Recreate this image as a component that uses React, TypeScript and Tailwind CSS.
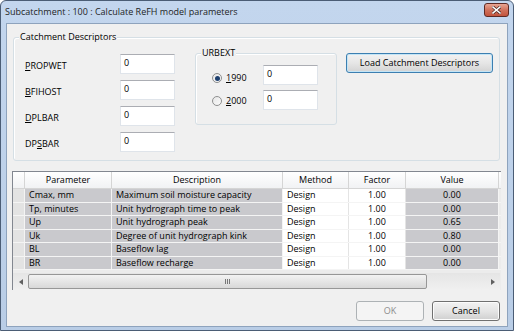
import React from "react";

const font = { fontFamily: "'Open Sans', 'Noto Sans', sans-serif" };

const rows = [
  { p: "Cmax, mm", d: "Maximum soil moisture capacity", v: "0.00" },
  { p: "Tp, minutes", d: "Unit hydrograph time to peak", v: "0.00" },
  { p: "Up", d: "Unit hydrograph peak", v: "0.65" },
  { p: "Uk", d: "Degree of unit hydrograph kink", v: "0.80" },
  { p: "BL", d: "Baseflow lag", v: "0.00" },
  { p: "BR", d: "Baseflow recharge", v: "0.00" },
];

function TextBox({ value }: { value: string }) {
  return (
    <div className="h-[20px] w-[55px] border border-[#dfe4ea] border-t-[#abadb3] bg-white pl-[3px] pt-[2px] text-[9px] leading-[12px]">
      {value}
    </div>
  );
}

function Label({ pre, u, post }: { pre?: string; u: string; post?: string }) {
  return (
    <span>
      {pre}
      <span className="underline underline-offset-1">{u}</span>
      {post}
    </span>
  );
}

function Radio({ checked }: { checked?: boolean }) {
  return (
    <div className="grid size-[10px] place-items-center rounded-full border border-[#8e8f8f] bg-gradient-to-br from-[#e6e6e6] to-[#fbfbfb]">
      {checked && <div className="size-[5px] rounded-full bg-[#1d3f6e]" />}
    </div>
  );
}

function Button({
  children,
  width,
  variant = "normal",
}: {
  children: React.ReactNode;
  width: string;
  variant?: "normal" | "default" | "disabled";
}) {
  return (
    <div
      className={
        "flex h-[20px] items-center justify-center rounded-[3px] border text-[9px] " +
        width +
        (variant === "disabled"
          ? " border-[#adb2b5] bg-[#f4f4f4] text-[#8d8d8d]"
          : variant === "default"
            ? " border-[#3c7fb1] bg-gradient-to-b from-[#f2f2f2] via-[#e6e6e6] to-[#d3d3d3] shadow-[inset_0_0_0_1px_#c4e5f6]"
            : " border-[#707070] bg-gradient-to-b from-[#f2f2f2] via-[#e5e5e5] to-[#cfcfcf] shadow-[inset_0_0_0_1px_#fcfcfc]")
      }
    >
      {children}
    </div>
  );
}

export default function App() {
  return (
    <div className="h-[331px] w-[514px] overflow-hidden text-black" style={font}>
      <div className="flex h-full w-full flex-col rounded-t-[6px] border border-[#4b5d75] bg-gradient-to-b from-[#c3d6ee] to-[#b9cde6]">
        {/* title bar */}
        <div className="flex h-[22px] items-center justify-between pl-[4px] pr-[4px]">
          <span className="text-[9px] text-[#1e1e1e]">Subcatchment : 100 : Calculate ReFH model parameters</span>
          <div className="mt-[-4px] flex h-[14px] w-[25px] items-center justify-center rounded-[3px] border border-[#5e2a25] bg-gradient-to-b from-[#e8a593] via-[#d0715c] to-[#c2533c]">
            <svg width="9" height="8" viewBox="0 0 9 8">
              <path d="M1 1 L8 7 M8 1 L1 7" stroke="#4a2520" strokeWidth="3" strokeLinecap="square" />
              <path d="M1 1 L8 7 M8 1 L1 7" stroke="#ffffff" strokeWidth="1.6" strokeLinecap="square" />
            </svg>
          </div>
        </div>

        {/* client area */}
        <div className="mx-[5px] h-[304px] border border-[#8ea3bd] bg-[#f0f0f0]">
          {/* Catchment Descriptors group */}
          <div className="relative ml-[6px] mt-[13px] h-[124px] w-[487px] rounded-[3px] border border-[#d5dfe5] shadow-[inset_1px_1px_0_#ffffff]">
            <span className="absolute left-[5px] top-[-7px] bg-[#f0f0f0] px-[1px] text-[9px] leading-[12px]">
              Catchment Descriptors
            </span>
            <div className="flex pl-[11px] pt-[15px] text-[9px]">
              <div className="mt-[1px] flex flex-col gap-[6px]">
                {[
                  <Label u="P" post="ROPWET" />,
                  <Label u="B" post="FIHOST" />,
                  <Label u="D" post="PLBAR" />,
                  <Label pre="DP" u="S" post="BAR" />,
                ].map((l, i) => (
                  <div key={i} className="flex items-center">
                    <div className="w-[95px] pt-[3px]">{l}</div>
                    <TextBox value="0" />
                  </div>
                ))}
              </div>

              <div className="relative ml-[20px] h-[72px] w-[142px] rounded-[3px] border border-[#d5dfe5] shadow-[inset_1px_1px_0_#ffffff]">
                <span className="absolute left-[5px] top-[-7px] bg-[#f0f0f0] px-[1px] leading-[12px]">URBEXT</span>
                <div className="flex flex-col gap-[5px] pl-[16px] pt-[11px]">
                  {["1990", "2000"].map((y, i) => (
                    <div key={y} className="flex items-center">
                      <div className={"flex w-[51px] items-center gap-[4px] " + (i === 0 ? "pt-[6px]" : "pt-[2px]")}>
                        <Radio checked={i === 0} />
                        <Label u={y[0]} post={y.slice(1)} />
                      </div>
                      <TextBox value="0" />
                    </div>
                  ))}
                </div>
              </div>

              <div className="ml-[9px]">
                <Button width="w-[147px]" variant="default">
                  Load Catchment Descriptors
                </Button>
              </div>
            </div>
          </div>

          {/* parameter grid */}
          <div className="ml-[5px] mt-[10px] h-[119px] w-[489px] border-l border-t border-l-[#828790] border-t-[#828790] bg-[#ececec] text-[9px]">
            <div className="flex h-[17px] border-b border-[#d5d5d5] bg-gradient-to-b from-[#ffffff] to-[#f1f2f4]">
              <div className="w-[12px] border-r border-[#d5d5d5]" />
              {[
                ["Parameter", "w-[87px]"],
                ["Description", "w-[171px]"],
                ["Method", "w-[66px]"],
                ["Factor", "w-[57px]"],
                ["Value", "w-[93px]"],
              ].map(([t, w]) => (
                <div key={t} className={"flex items-center justify-center border-r border-[#d5d5d5] " + w}>
                  {t}
                </div>
              ))}
            </div>
            {rows.map((r) => (
              <div key={r.p} className="flex h-[13.5px] border-b border-[#f4f4f4] leading-[12px]">
                <div className="w-[12px] border-r border-[#f4f4f4] bg-[#e3e3e3]" />
                <div className="w-[87px] border-r border-[#f4f4f4] bg-[#c9c9cd] pl-[4px]">{r.p}</div>
                <div className="w-[171px] border-r border-[#f4f4f4] bg-[#c9c9cd] pl-[4px]">{r.d}</div>
                <div className="w-[66px] border-r border-[#e4e4e4] bg-white pl-[4px]">Design</div>
                <div className="w-[57px] border-r border-[#e4e4e4] bg-white text-center">1.00</div>
                <div className="w-[93px] border-r border-[#f4f4f4] bg-[#c9c9cd] text-center">{r.v}</div>
              </div>
            ))}
            {/* horizontal scrollbar */}
            <div className="mt-[3px] flex h-[17px] w-[487px] items-center bg-gradient-to-b from-[#e5e5e5] to-[#f0f0f0]">
              <div className="flex h-full w-[15px] items-center justify-center">
                <svg width="4" height="6" viewBox="0 0 4 6">
                  <path d="M4 0 L0 3 L4 6 Z" fill="#606060" />
                </svg>
              </div>
              <div className="flex h-[15px] w-[399px] items-center justify-center rounded-[2px] border border-[#979797] bg-gradient-to-b from-[#f3f3f3] to-[#d8d8d8]">
                <div className="flex gap-[1px]">
                  <div className="h-[5px] w-[1px] bg-[#777]" />
                  <div className="h-[5px] w-[1px] bg-[#777]" />
                  <div className="h-[5px] w-[1px] bg-[#777]" />
                </div>
              </div>
              <div className="flex-1" />
              <div className="flex h-full w-[15px] items-center justify-center">
                <svg width="4" height="6" viewBox="0 0 4 6">
                  <path d="M0 0 L4 3 L0 6 Z" fill="#606060" />
                </svg>
              </div>
            </div>
          </div>

          {/* buttons */}
          <div className="mt-[11px] flex justify-end gap-[8px] pr-[7px]">
            <Button width="w-[68px]" variant="disabled">
              OK
            </Button>
            <Button width="w-[68px]">Cancel</Button>
          </div>
        </div>
      </div>
    </div>
  );
}
